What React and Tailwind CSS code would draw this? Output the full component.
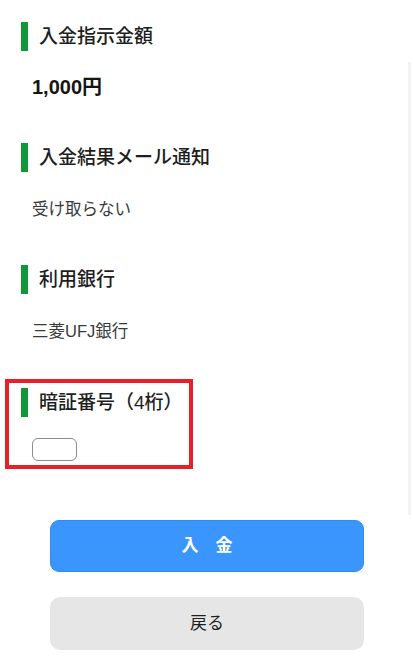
import React from "react";

function Heading({ children }) {
  return (
    <div className="flex items-center h-[29px]">
      <div className="w-[7px] h-[29px] bg-[#12963a]" />
      <div className="ml-[11px] text-[19px] leading-[29px] text-[#1e1e1e] font-medium whitespace-nowrap">
        {children}
      </div>
    </div>
  );
}

export default function App() {
  return (
    <div
      className="relative w-[413px] h-[672px] bg-white overflow-hidden"
      style={{ fontFamily: '"Liberation Sans", "Noto Sans CJK JP", sans-serif' }}
    >
      <div className="pt-[22px]">
        <div className="pl-[21px]">
          <Heading>入金指示金額</Heading>
          <div className="mt-[24px] ml-[11px] h-[24px] text-[20px] leading-[24px] font-bold text-[#151515]">
            1,000円
          </div>
        </div>

        <div className="pl-[21px] mt-[44px]">
          <Heading>入金結果メール通知</Heading>
          <div className="mt-[25px] ml-[11px] h-[24px] text-[16.5px] leading-[24px] text-[#3a3a3a]">
            受け取らない
          </div>
        </div>

        <div className="pl-[21px] mt-[44px]">
          <Heading>利用銀行</Heading>
          <div className="mt-[25px] ml-[11px] h-[24px] text-[16.5px] leading-[24px] text-[#3a3a3a]">
            三菱UFJ銀行
          </div>
        </div>

        <div className="mt-[36px] ml-[5px] w-[188px] border-4 border-[#e8202a] pl-[12px] pt-[5px] pb-[4px]">
          <Heading>暗証番号（4桁）</Heading>
          <div className="mt-[21px] ml-[11px] w-[45px] h-[23px] border border-[#8c8c8c] rounded-[6px] bg-white" />
        </div>

        <div className="mt-[51px] ml-[50px] w-[314px] flex flex-col gap-[25px]">
          <button className="h-[52px] rounded-[9px] bg-[#3a96fd] border border-[#2f8cf5] text-white text-[17px] font-bold">
            入　金
          </button>
          <button className="h-[53px] rounded-[10px] bg-[#e6e6e6] text-[#1e1e1e] text-[17px] font-normal">
            戻る
          </button>
        </div>
      </div>

      <div className="absolute left-[408px] top-[62px] w-[3px] h-[453px] bg-[#f3f3f3]" />
    </div>
  );
}
